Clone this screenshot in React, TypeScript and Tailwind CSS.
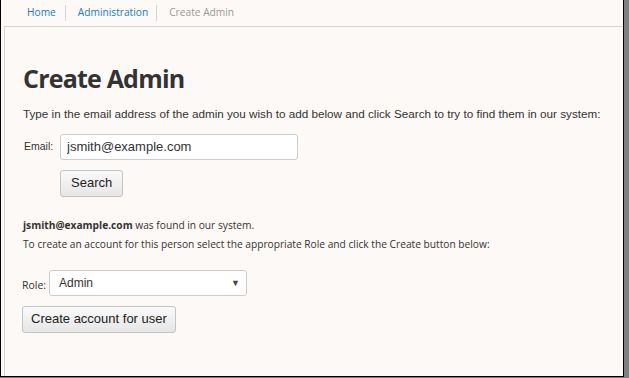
export default function App() {
  return (
    <div className="w-[629px] h-[378px] bg-[#808080] overflow-hidden">
      <div className="w-[624px] h-[377px] bg-[#fdf9f6] border-l border-r border-b border-black flex flex-col">
        <nav
          className="h-[26px] flex items-center text-[10.2px] pl-[21px]"
          style={{ fontFamily: '"Open Sans", sans-serif' }}
        >
          <a className="px-[5px] text-[#1a7ac4]">Home</a>
          <span className="w-px h-[16px] bg-[#d8d4d0] ml-[4px] mr-[7px]" />
          <a className="px-[5px] text-[#1a7ac4]">Administration</a>
          <span className="w-px h-[16px] bg-[#d8d4d0] ml-[3px] mr-[7px]" />
          <span className="px-[5px] text-[#999]">Create Admin</span>
        </nav>
        <div className="flex-1 ml-[3px] border-l border-t border-[#d8d4d0] pl-[18px] pt-[39px] text-[#333]">
          <h1
            className="text-[25px] font-bold leading-none tracking-[-0.8px]"
            style={{ fontFamily: '"Open Sans", sans-serif' }}
          >
            Create Admin
          </h1>
          <p
            className="mt-[17px] text-[11.7px] leading-none"
            style={{ fontFamily: '"Liberation Sans", Arial, sans-serif' }}
          >
            Type in the email address of the admin you wish to add below and click Search to try to find them in our system:
          </p>
          <div style={{ fontFamily: '"Liberation Sans", Arial, sans-serif' }}>
            <div className="flex items-center mt-[14px]">
              <label className="w-[37px] text-[10.5px] pl-px">Email:</label>
              <input
                readOnly
                value="jsmith@example.com"
                className="w-[238px] h-[26px] border border-[#ccc] rounded-[3px] bg-white px-[6px] text-[13px] text-[#333] outline-none"
              />
            </div>
            <button className="ml-[37px] mt-[10px] h-[27px] px-[10px] text-[13px] text-[#222] border border-[#c4c4c4] rounded-[3px] bg-gradient-to-b from-[#fafafa] to-[#e6e6e6]">
              Search
            </button>
          </div>
          <div
            className="mt-[19px] text-[10.2px] text-[#333] leading-[19px]"
            style={{ fontFamily: '"Open Sans", sans-serif' }}
          >
            <p>
              <b>jsmith@example.com</b> was found in our system.
            </p>
            <p>To create an account for this person select the appropriate Role and click the Create button below:</p>
          </div>
          <div className="mt-[16px] flex items-end" style={{ fontFamily: '"Liberation Sans", Arial, sans-serif' }}>
            <label className="text-[10.5px] w-[27px] mb-[2px] -ml-px" style={{ fontFamily: '"Open Sans", sans-serif' }}>
              Role:
            </label>
            <div className="relative w-[198px] h-[26px] border border-[#ccc] rounded-[3px] bg-white flex items-center px-[9px] text-[12px] text-[#333]">
              Admin
              <span className="absolute right-[6px] top-[6px] text-[9px] text-[#444]">▼</span>
            </div>
          </div>
          <button
            className="mt-[10px] -ml-px h-[27px] px-[8px] text-[13px] text-[#222] border border-[#c4c4c4] rounded-[3px] bg-gradient-to-b from-[#fafafa] to-[#e6e6e6]"
            style={{ fontFamily: '"Liberation Sans", Arial, sans-serif' }}
          >
            Create account for user
          </button>
        </div>
      </div>
    </div>
  );
}
